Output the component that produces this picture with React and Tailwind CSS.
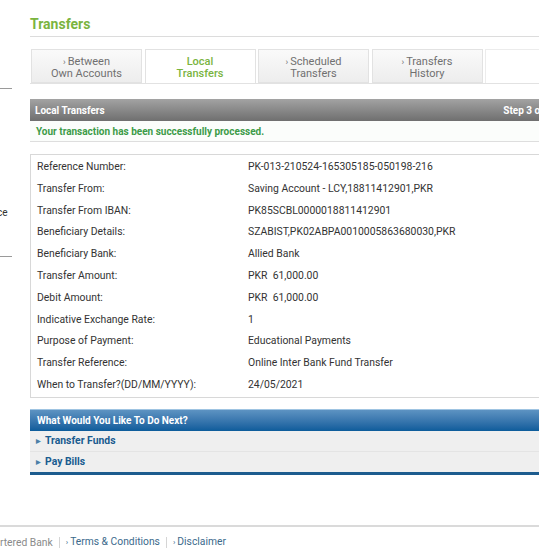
import React from 'react';

const rows = [
  ['Reference Number:', 'PK-013-210524-165305185-050198-216'],
  ['Transfer From:', 'Saving Account - LCY,18811412901,PKR'],
  ['Transfer From IBAN:', 'PK85SCBL0000018811412901'],
  ['Beneficiary Details:', 'SZABIST,PK02ABPA0010005863680030,PKR'],
  ['Beneficiary Bank:', 'Allied Bank'],
  ['Transfer Amount:', 'PKR  61,000.00'],
  ['Debit Amount:', 'PKR  61,000.00'],
  ['Indicative Exchange Rate:', '1'],
  ['Purpose of Payment:', 'Educational Payments'],
  ['Transfer Reference:', 'Online Inter Bank Fund Transfer'],
  ['When to Transfer?(DD/MM/YYYY):', '24/05/2021'],
];

const tabs = [
  { a: 'Between', b: 'Own Accounts' },
  { a: 'Local', b: 'Transfers', active: true },
  { a: 'Scheduled', b: 'Transfers' },
  { a: 'Transfers', b: 'History' },
];

function Tab({ a, b, active }) {
  if (active) {
    return (
      <div className="w-[111px] h-[34px] pt-[3px] border border-[#e2e2e2] border-b-0 bg-white flex flex-col items-center justify-center leading-[12px] text-[11px] font-medium text-[#7ab43f]">
        <span>{a}</span>
        <span>{b}</span>
      </div>
    );
  }
  return (
    <div className="w-[111px] h-[34px] pt-[3px] border border-[#e2e2e2] bg-gradient-to-b from-[#fafafa] to-[#ededed] flex flex-col items-center justify-center leading-[12px] text-[11px] text-[#707070]">
      <span>
        <span className="text-[9px] mr-[2px]">›</span>
        {a}
      </span>
      <span>{b}</span>
    </div>
  );
}

export default function App() {
  return (
    <div
      className="w-[539px] h-[553px] overflow-hidden bg-white relative"
      style={{ fontFamily: 'Roboto, "Liberation Sans", sans-serif' }}
    >
      <div className="flex">
        {/* cut-off sidebar */}
        <div className="w-[12px] shrink-0 pt-[88px]">
          <div className="h-[1px] bg-[#9a9a9a]" />
          <div className="mt-[118px] text-[10px] text-[#333] leading-[12px] -ml-[3px]">ce</div>
          <div className="mt-[37px] h-[1px] bg-[#9a9a9a]" />
        </div>

        <div className="ml-[18px] w-[560px] shrink-0">
          <div className="pt-[15px] pb-[3px] text-[14px] font-bold text-[#7ab43f] leading-[18px]">Transfers</div>
          <div className="h-[1px] bg-[#dcdcdc]" />

          {/* tabs */}
          <div className="mt-[12px] flex gap-[2.5px] border-b border-[#e2e2e2] pl-[1px]">
            {tabs.map((t) => (
              <Tab key={t.a + t.b} {...t} />
            ))}
            <div className="flex-1 border-t border-l border-[#ececec]" />
          </div>

          {/* grey header */}
          <div className="mt-[15px] h-[22px] bg-gradient-to-b from-[#a3a3a3] to-[#6f6f6f] flex items-center justify-between px-[5px] text-[10px] font-bold text-white">
            <span>Local Transfers</span>
            <span className="mr-[33px]">Step 3 of 3</span>
          </div>
          <div className="h-[21px] bg-[#fbfdfb] border-b border-[#dedede] flex items-center px-[6px] text-[10px] font-bold text-[#3c9b48]">
            Your transaction has been successfully processed.
          </div>

          {/* details */}
          <div className="mt-[12px] border border-[#d8d8d8] pt-[1px] pb-[1px] pl-[6px]">
            {rows.map(([l, v]) => (
              <div key={l} className="flex h-[21.8px] items-center text-[10.4px] text-[#333]">
                <span className="w-[211px] shrink-0">{l}</span>
                <span className="whitespace-pre">{v}</span>
              </div>
            ))}
          </div>

          {/* next */}
          <div className="mt-[11px] border-b-[3px] border-[#1d5c8e]">
            <div className="h-[22px] bg-gradient-to-b from-[#5d93c2] to-[#0b5c9b] flex items-center px-[7px] text-[10px] font-bold text-white border-t border-[#9fc4e2]">
              What Would You Like To Do Next?
            </div>
            <div className="h-[21px] bg-[#efefef] border-b border-[#e4e4e4] flex items-center px-[6px] text-[10.4px] font-bold text-[#1a5c8f]">
              <span className="text-[6px] mr-[4px] text-[#4a7fa8]">▶</span>Transfer Funds
            </div>
            <div className="h-[20px] bg-[#efefef] flex items-center px-[6px] text-[10.4px] font-bold text-[#1a5c8f]">
              <span className="text-[6px] mr-[4px] text-[#4a7fa8]">▶</span>Pay Bills
            </div>
          </div>
        </div>
      </div>

      {/* footer */}
      <div className="absolute left-0 right-0 top-[525px] h-[2px] bg-[#dadada]" />
      <div className="absolute left-0 top-[535px] flex items-center text-[10.3px] leading-[14px]">
        <span className="text-[#8a8a8a]">rtered Bank</span>
        <span className="mx-[6px] w-[1px] h-[11px] bg-[#d5d5d5]" />
        <span className="text-[#3b6a8c]"><span className="text-[8px] mr-[2px]">›</span>Terms &amp; Conditions</span>
        <span className="mx-[6px] w-[1px] h-[11px] bg-[#d5d5d5]" />
        <span className="text-[#3b6a8c]"><span className="text-[8px] mr-[2px]">›</span>Disclaimer</span>
      </div>
    </div>
  );
}
